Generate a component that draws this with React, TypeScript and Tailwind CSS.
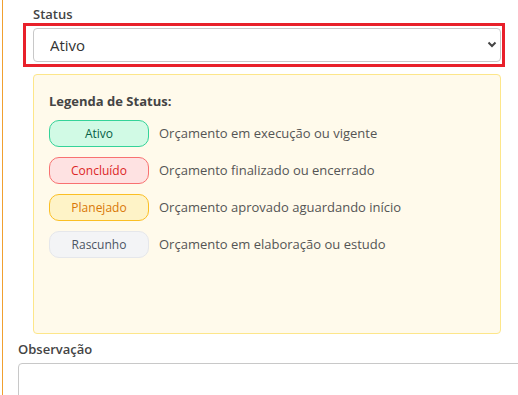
import React from "react";

const legend = [
  {
    label: "Ativo",
    text: "Orçamento em execução ou vigente",
    badge: "bg-[#d1fae5] border-[#34d399] text-[#065f46]",
  },
  {
    label: "Concluído",
    text: "Orçamento finalizado ou encerrado",
    badge: "bg-[#fee2e2] border-[#f87171] text-[#dc2626]",
  },
  {
    label: "Planejado",
    text: "Orçamento aprovado aguardando início",
    badge: "bg-[#fef3c7] border-[#fbbf24] text-[#d97706]",
  },
  {
    label: "Rascunho",
    text: "Orçamento em elaboração ou estudo",
    badge: "bg-[#f3f4f6] border-[#e5e7eb] text-[#4b5563]",
  },
];

export default function App() {
  return (
    <div
      className="relative h-[395px] w-[518px] overflow-hidden bg-white"
      style={{ fontFamily: '"Open Sans", "Noto Sans", sans-serif' }}
    >
      <div className="ml-[2px] h-full border-l border-[#f0a030] pl-[15px]">
        <div className="pl-[15px] pr-[17px]">
          <label className="block pt-[5px] text-[13px] leading-[18px] font-semibold text-[#444]">
            Status
          </label>
          <div className="relative mt-[5px]">
            <select
              className="h-[34px] w-full appearance-none rounded-[4px] border border-[#c8c8c8] bg-white pl-[16px] text-[15px] text-[#333] outline-none"
              defaultValue="Ativo"
            >
              <option>Ativo</option>
              <option>Concluído</option>
              <option>Planejado</option>
              <option>Rascunho</option>
            </select>
            <svg
              className="pointer-events-none absolute right-[4px] top-[13px]"
              width="10"
              height="7"
              viewBox="0 0 10 7"
            >
              <path d="M1.5 1.5 L5 5 L8.5 1.5" fill="none" stroke="#444" strokeWidth="2" />
            </svg>
          </div>

          <div className="mt-[12px] h-[260px] rounded-[4px] border border-[#fde68a] bg-[#fffaeb] px-[15px] pt-[16px]">
            <h4 className="text-[13px] leading-[20px] font-bold text-[#444]">
              Legenda de Status:
            </h4>
            <div className="mt-[9px] flex flex-col gap-[10px]">
              {legend.map((item) => (
                <div key={item.label} className="flex items-center gap-[10px]">
                  <span
                    className={`flex h-[27px] w-[100px] items-center justify-center rounded-[10px] border text-[12px] ${item.badge}`}
                  >
                    {item.label}
                  </span>
                  <span className="text-[13px] text-[#555]">{item.text}</span>
                </div>
              ))}
            </div>
          </div>
        </div>

        <label className="mt-[6px] block text-[13px] leading-[18px] font-semibold text-[#444]">
          Observação
        </label>
        <textarea className="mt-[5px] h-[60px] w-[520px] rounded-[4px] border border-[#c8c8c8] bg-white" />
      </div>

      {/* highlight annotation */}
      <div className="pointer-events-none absolute left-[23px] top-[23px] h-[44px] w-[482px] border-[3px] border-[#e8202a]" />
    </div>
  );
}
